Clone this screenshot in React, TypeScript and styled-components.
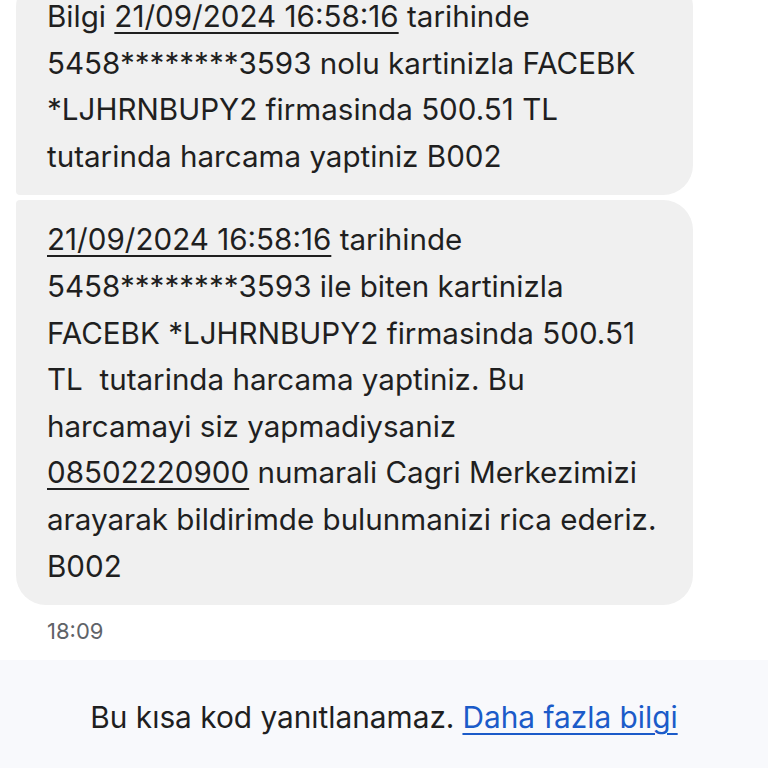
import React from "react";
import styled, { createGlobalStyle } from "styled-components";

const Global = createGlobalStyle`
  html, body { margin: 0; padding: 0; background: #ffffff; }
  body { font-family: Inter, Roboto, "Noto Sans", "Liberation Sans", sans-serif; overflow: hidden; }
  #root { height: 768px; }
`;

const Screen = styled.div`
  height: 768px;
  display: flex;
  flex-direction: column;
  overflow: hidden;
  background: #ffffff;
`;

const Thread = styled.div`
  display: flex;
  flex-direction: column;
  gap: 5px;
  padding: 0 0 0 16px;
  margin-top: -23px;
`;

const Bubble = styled.div<{ $last?: boolean }>`
  width: 677px;
  box-sizing: border-box;
  background: #f0f0f0;
  border-radius: ${(p) => (p.$last ? "4px 30px 30px 30px" : "30px 30px 30px 4px")};
  padding: 16px 16px 16px 31px;
  color: #1f1f1f;
  font-size: 29.6px;
  line-height: 46.6px;
  letter-spacing: 0;
`;

const Line = styled.div`
  white-space: pre;
`;

const Under = styled.span`
  text-decoration: underline;
  text-decoration-thickness: 2px;
  text-underline-offset: 5px;
`;

const Time = styled.div`
  margin: 6px 0 0 31px;
  font-size: 22px;
  line-height: 30px;
  color: #5f6368;
`;

const Footer = styled.div`
  margin-top: auto;
  height: 108px;
  background: #f8f9fc;
  display: flex;
  align-items: center;
  justify-content: center;
  font-size: 29.8px;
  color: #1f1f1f;
  padding-top: 6px;
  box-sizing: border-box;
`;

const Link = styled.a`
  color: #1b5bc9;
  text-decoration: underline;
  text-decoration-thickness: 2px;
  text-underline-offset: 5px;
  margin-left: 8px;
`;

export default function App() {
  return (
    <Screen>
      <Global />
      <Thread>
        <Bubble>
          <Line>
            Bilgi <Under>21/09/2024 16:58:16</Under> tarihinde
          </Line>
          <Line>5458********3593 nolu kartinizla FACEBK</Line>
          <Line>*LJHRNBUPY2 firmasinda 500.51 TL</Line>
          <Line>tutarinda harcama yaptiniz B002</Line>
        </Bubble>
        <Bubble $last>
          <Line>
            <Under>21/09/2024 16:58:16</Under> tarihinde
          </Line>
          <Line>5458********3593 ile biten kartinizla</Line>
          <Line>FACEBK *LJHRNBUPY2 firmasinda 500.51</Line>
          <Line>TL  tutarinda harcama yaptiniz. Bu</Line>
          <Line>harcamayi siz yapmadiysaniz</Line>
          <Line>
            <Under>08502220900</Under> numarali Cagri Merkezimizi
          </Line>
          <Line>arayarak bildirimde bulunmanizi rica ederiz.</Line>
          <Line>B002</Line>
        </Bubble>
        <Time>18:09</Time>
      </Thread>
      <Footer>
        Bu kısa kod yanıtlanamaz.<Link href="#">Daha fazla bilgi</Link>
      </Footer>
    </Screen>
  );
}
